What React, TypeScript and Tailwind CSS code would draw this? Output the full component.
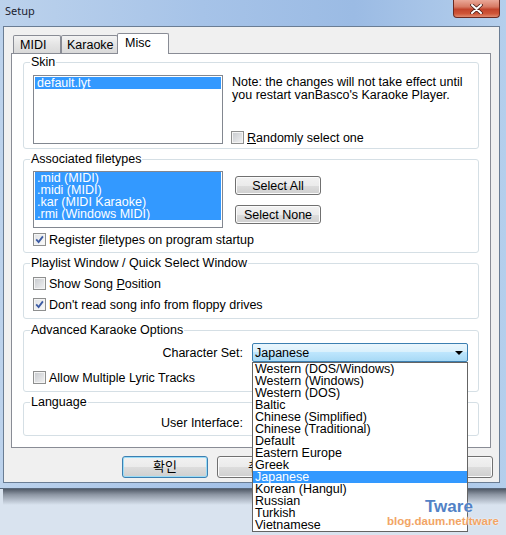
import React from "react";

const Check = ({ checked }: { checked?: boolean }) => (
  <span
    className={
      "flex h-[13px] w-[13px] shrink-0 items-center justify-center border border-[#8e8f8f] shadow-[inset_0_0_0_1px_#f4f4f4] " +
      (checked
        ? "bg-[linear-gradient(135deg,#dfe1e4,#fbfbfb)]"
        : "bg-[linear-gradient(135deg,#c6c9cd,#f2f2f3)]")
    }
  >
    {checked && (
      <svg width="9" height="9" viewBox="0 0 9 9">
        <path d="M1.2 4.4 L3.6 7 L7.9 1.4" fill="none" stroke="#3b5aa3" strokeWidth="1.8" />
      </svg>
    )}
  </span>
);

const Row = ({ checked, children }: { checked?: boolean; children: React.ReactNode }) => (
  <div className="flex h-[13px] items-center gap-[3px] leading-[12px]">
    <Check checked={checked} />
    <span className="whitespace-nowrap">{children}</span>
  </div>
);

const Group = ({
  title,
  className,
  children,
}: {
  title: string;
  className: string;
  children: React.ReactNode;
}) => (
  <div className={"relative rounded-[3px] border border-[#d5dfe5] " + className}>
    <span className="absolute -top-[7px] left-[6px] whitespace-nowrap bg-white px-[1px] leading-[12px]">
      {title}
    </span>
    {children}
  </div>
);

const Btn = ({
  children,
  className,
  focused,
}: {
  children?: React.ReactNode;
  className: string;
  focused?: boolean;
}) => (
  <div
    className={
      "flex items-center justify-center rounded-[3px] border bg-[linear-gradient(#f2f2f2,#ebebeb_50%,#dddddd_50%,#cfcfcf)] leading-[12px] " +
      (focused
        ? "border-[#3c7fb1] shadow-[inset_0_0_0_1px_#9adcf7]"
        : "border-[#707070] shadow-[inset_0_0_0_1px_#fbfbfb]") +
      " " +
      className
    }
  >
    {children}
  </div>
);

const Arrow = () => (
  <svg width="8" height="4" viewBox="0 0 8 4">
    <polygon points="0,0 8,0 4,4" fill="#000" />
  </svg>
);

const charsets = [
  "Western (DOS/Windows)",
  "Western (Windows)",
  "Western (DOS)",
  "Baltic",
  "Chinese (Simplified)",
  "Chinese (Traditional)",
  "Default",
  "Eastern Europe",
  "Greek",
  "Japanese",
  "Korean (Hangul)",
  "Russian",
  "Turkish",
  "Vietnamese",
];

export default function App() {
  return (
    <div className="relative h-[535px] w-[506px] overflow-hidden bg-[#d9e3ef] font-['Liberation_Sans','Noto_Sans_CJK_KR',sans-serif] text-[12.5px] text-black">
      {/* window */}
      <div className="flex h-[489px] flex-col border-b border-[#58687c] bg-[linear-gradient(90deg,#bcd2ec_0%,#a6c3e8_40%,#9bbbe4_70%,#b5cfec_100%)]">
        {/* title bar */}
        <div className="flex h-[26px] items-start justify-between pl-[5px] pr-[6px]">
          <span className="mt-[3px] font-['Noto_Sans',sans-serif] text-[11px] leading-[15px] text-[#1b2230]">
            Setup
          </span>
          <div className="flex h-[18px] w-[47px] items-center justify-center rounded-b-[4px] border border-t-0 border-[#6b2a22] bg-[linear-gradient(#eaa898,#d77a64_40%,#c2442c_55%,#cf5538_80%,#e08a70)]">
            <svg width="13" height="10" viewBox="0 0 13 10">
              <path d="M2 1 L11 9 M11 1 L2 9" stroke="#4a1e18" strokeWidth="3.6" strokeLinecap="round" />
              <path d="M2 1 L11 9 M11 1 L2 9" stroke="#ffffff" strokeWidth="2" strokeLinecap="round" />
            </svg>
          </div>
        </div>
        {/* client */}
        <div className="ml-[3px] flex h-[457px] w-[497px] flex-col border border-[#6a7d94] bg-[#f0f0f0]">
          {/* tabs */}
          <div className="ml-[9px] mt-[6px] flex h-[20px] items-end">
            <div className="flex h-[18px] w-[48px] items-center rounded-t-[2px] border border-b-0 border-[#898c95] bg-[linear-gradient(#f3f3f3,#e4e4e4_50%,#d9d9d9)] pl-[6px] leading-[12px]">
              MIDI
            </div>
            <div className="flex h-[18px] w-[57px] items-center rounded-t-[2px] border border-b-0 border-[#898c95] bg-[linear-gradient(#f3f3f3,#e4e4e4_50%,#d9d9d9)] pl-[5px] leading-[12px]">
              Karaoke
            </div>
            <div className="relative z-10 -mb-[1px] -ml-[1px] flex h-[21px] w-[52px] items-start rounded-t-[2px] border border-b-0 border-[#898c95] bg-white pl-[7px] pt-[3px] leading-[12px]">
              Misc
            </div>
          </div>
          {/* panel */}
          <div className="ml-[7px] flex h-[395px] w-[480px] flex-col border border-[#898c95] bg-white px-[11px]">
            <Group title="Skin" className="mt-[8px] flex h-[87px] pl-[9px] pt-[12px]">
              <div className="h-[69px] w-[190px] border border-[#828790] bg-white px-[1px] pt-[1px]">
                <div className="h-[12px] bg-[#3399ff] pl-[2px] leading-[12px] text-white">default.lyt</div>
              </div>
              <div className="ml-[9px] flex h-[69px] flex-col justify-between">
                <div className="mt-[1px] leading-[13px]">
                  <div>Note: the changes will not take effect until</div>
                  <div>you restart vanBasco's Karaoke Player.</div>
                </div>
                <div className="-ml-[1px]">
                  <Row>
                    <span className="underline">R</span>andomly select one
                  </Row>
                </div>
              </div>
            </Group>

            <Group title="Associated filetypes" className="mt-[10px] flex h-[94px] flex-col pl-[9px] pt-[11px]">
              <div className="flex">
                <div className="h-[57px] w-[190px] border border-[#828790] bg-white px-[1px]">
                  {[".mid (MIDI)", ".midi (MIDI)", ".kar (MIDI Karaoke)", ".rmi (Windows MIDI)"].map((t) => (
                    <div key={t} className="h-[12px] bg-[#3399ff] pl-[2px] leading-[12px] text-white">
                      {t}
                    </div>
                  ))}
                </div>
                <div className="ml-[12px] flex flex-col gap-[10px] pt-[5px]">
                  <Btn className="h-[19px] w-[86px]">Select All</Btn>
                  <Btn className="h-[19px] w-[86px]">Select None</Btn>
                </div>
              </div>
              <div className="mt-[5px]">
                <Row checked>
                  Register <span className="underline">f</span>iletypes on program startup
                </Row>
              </div>
            </Group>

            <Group
              title="Playlist Window / Quick Select Window"
              className="mt-[10px] flex h-[56px] flex-col gap-[8px] pl-[9px] pt-[13px]"
            >
              <Row>
                Show Song <span className="underline">P</span>osition
              </Row>
              <Row checked>Don't read song info from floppy drives</Row>
            </Group>

            <Group title="Advanced Karaoke Options" className="mt-[11px] flex h-[62px] flex-col pt-[12px]">
              <div className="flex items-center">
                <div className="w-[219px] text-right leading-[12px]">Character Set:</div>
                <div className="ml-[9px] flex h-[19px] w-[216px] items-center justify-between rounded-[2px] border border-[#3c7fb1] bg-[linear-gradient(#eaf6fd,#d9f0fc_50%,#bee6fd_50%,#a7d9f5)] pl-[2px] pr-[4px] leading-[12px]">
                  <span>Japanese</span>
                  <Arrow />
                </div>
              </div>
              <div className="ml-[9px] mt-[9px]">
                <Row>Allow Multiple Lyric Tracks</Row>
              </div>
            </Group>

            <Group title="Language" className="mt-[10px] flex h-[34px] pt-[7px]">
              <div className="flex items-center">
                <div className="w-[219px] text-right leading-[12px]">User Interface:</div>
                <div className="ml-[9px] flex h-[19px] w-[216px] items-center justify-end rounded-[2px] border border-[#acacac] bg-[linear-gradient(#f2f2f2,#ebebeb_50%,#dddddd_50%,#cfcfcf)] pr-[4px]">
                  <Arrow />
                </div>
              </div>
            </Group>
          </div>
          {/* buttons */}
          <div className="mt-[8px] flex justify-end gap-[9px] pr-[6px]">
            <Btn focused className="h-[22px] w-[86px] text-[13px]">
              확인
            </Btn>
            <Btn className="h-[22px] w-[86px] text-[13px]">취소</Btn>
            <Btn className="h-[22px] w-[86px]" />
            <Btn className="h-[22px] w-[86px]" />
          </div>
        </div>
      </div>
      {/* window shadow */}
      <div className="ml-[3px] h-[16px] bg-[linear-gradient(#505966,#8d96a3_35%,#d9e3ef)]" />

      {/* open dropdown list */}
      <div className="absolute left-[252px] top-[362px] z-20 w-[216px] border border-[#646464] bg-white">
        {charsets.map((c) => (
          <div
            key={c}
            className={
              "h-[12px] whitespace-nowrap pl-[2px] leading-[12px] " +
              (c === "Japanese" ? "bg-[#3399ff] text-white" : "")
            }
          >
            {c}
          </div>
        ))}
      </div>

      {/* watermark */}
      <div className="absolute left-[425px] top-[498px] z-30 font-['Liberation_Sans',sans-serif] text-[17px] font-bold leading-[17px] text-[#5282c6] [text-shadow:0_0_2px_#ffffff]">
        Tware
      </div>
      <div className="absolute left-[387px] top-[515px] z-30 font-['Liberation_Sans',sans-serif] text-[11.5px] font-bold leading-[12px] text-[#f2a565] [text-shadow:0_0_2px_#ffffff]">
        blog.daum.net/tware
      </div>
    </div>
  );
}
